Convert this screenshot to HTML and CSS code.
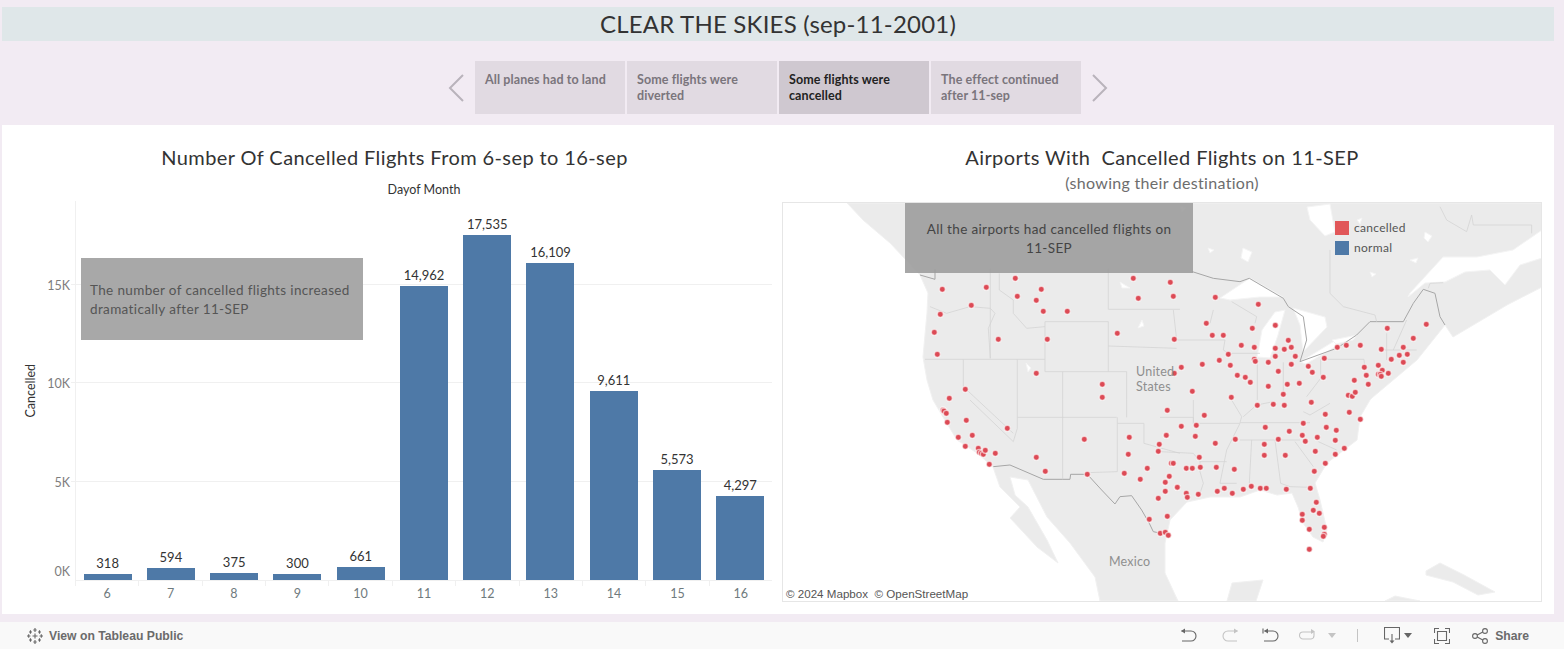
FILE: index.html
```html
<!DOCTYPE html>
<html lang="en">
<head>
<meta charset="utf-8">
<title>Clear the skies</title>
<link rel="stylesheet" href="styles.css">
</head>
<body>
<div class="dashboard">
  <header class="band"><h1>CLEAR THE SKIES (sep-11-2001)</h1></header>
  <nav class="story">
    <svg class="arrow" width="18" height="28" viewBox="0 0 18 28"><path d="M16 1 3 14l13 13"/></svg>
    <div class="tile">All planes had to land</div>
    <div class="tile">Some flights were diverted</div>
    <div class="tile active">Some flights were cancelled</div>
    <div class="tile">The effect continued after 11-sep</div>
    <svg class="arrow" width="18" height="28" viewBox="0 0 18 28"><path d="M2 1l13 13L2 27"/></svg>
  </nav>
  <main class="panel">
    <section class="left">
      <h2 class="chart-title">Number Of Cancelled Flights From 6-sep to 16-sep</h2>
      <div class="x-title">Dayof Month</div>
      <div class="chart">
        <div class="y-title"><span>Cancelled</span></div>
        <div class="y-axis">
          <span class="y-tick" style="bottom:2px">0K</span>
          <span class="y-tick" style="bottom:91px">5K</span>
          <span class="y-tick" style="bottom:190px">10K</span>
          <span class="y-tick" style="bottom:288px">15K</span>
        </div>
        <div class="plot-wrap">
          <div class="plot">
            <i class="grid" style="bottom:98px"></i>
            <i class="grid" style="bottom:197px"></i>
            <i class="grid" style="bottom:295px"></i>
            <div class="col"><span class="val">318</span><div class="bar" style="height:6px"></div></div>
            <div class="col"><span class="val">594</span><div class="bar" style="height:12px"></div></div>
            <div class="col"><span class="val">375</span><div class="bar" style="height:7px"></div></div>
            <div class="col"><span class="val">300</span><div class="bar" style="height:6px"></div></div>
            <div class="col"><span class="val">661</span><div class="bar" style="height:13px"></div></div>
            <div class="col"><span class="val">14,962</span><div class="bar" style="height:294px"></div></div>
            <div class="col"><span class="val">17,535</span><div class="bar" style="height:345px"></div></div>
            <div class="col"><span class="val">16,109</span><div class="bar" style="height:317px"></div></div>
            <div class="col"><span class="val">9,611</span><div class="bar" style="height:189px"></div></div>
            <div class="col"><span class="val">5,573</span><div class="bar" style="height:110px"></div></div>
            <div class="col"><span class="val">4,297</span><div class="bar" style="height:84px"></div></div>
          </div>
          <div class="x-axis">
            <span>6</span><span>7</span><span>8</span><span>9</span><span>10</span><span>11</span><span>12</span><span>13</span><span>14</span><span>15</span><span>16</span>
          </div>
        </div>
        <div class="note note-left">The number of cancelled flights increased dramatically after 11-SEP</div>
      </div>
    </section>
    <section class="right">
      <h2 class="chart-title">Airports With&nbsp; Cancelled Flights on 11-SEP</h2>
      <div class="subtitle">(showing their destination)</div>
      <div class="map">
        <svg class="map-svg" width="760" height="400" viewBox="782 202 760 400">
          <path class="land" d="M847 203H1542V287L1507 305 1453 337 1445 325 1417 360 1373 397 1370 400 1360 417 1357 440 1327 463 1315 483 1320 500 1327 530 1323 542 1313 537 1303 523 1298 507 1292 493 1277 495 1260 490 1240 497 1210 497 1187 502 1170 520 1165 543 1165 573 1178 601H1100L1095 577 1070 543 1047 517 1028 480 1010 477 1015 495 1028 507 1047 540 1058 563 1037 547 1010 518 1020 507 1000 487 993 467 977 453 957 440 943 417 933 400 927 380 923 357 927 313 928 293 920 275 890 243 863 220Z"/>
          <path class="land" d="M1426 571 1440 563 1464 575 1495 592 1478 595 1453 582 1426 575ZM1227 601 1232 583 1263 580 1256 601ZM1385 601 1395 596 1420 601Z"/>
          <g class="water">
            <path d="M1307 207 1330 204 1335 232 1325 236 1310 220Z"/>
            <path d="M1220 298 1250 278 1283 297 1260 297 1230 300Z"/>
            <path d="M1257 357 1262 330 1275 312 1285 310 1278 335 1270 358Z"/>
            <path d="M1293 308 1325 317 1327 327 1303 352 1300 325Z"/>
            <path d="M1300 362 1336 340 1340 344 1306 364Z"/>
            <path d="M1332 340 1357 335 1353 340 1336 344Z"/>
            <path d="M1542 230 1513 250 1477 257 1443 257 1410 293 1408 297 1425 283 1445 282 1465 272 1490 270 1505 285 1520 265 1542 258Z"/>
            <path d="M1243 248 1252 252 1248 262 1241 258ZM1208 248 1214 250 1210 253ZM1370 272 1376 274 1372 277ZM1425 232 1432 236 1428 242 1424 238ZM1410 260 1418 258 1416 263ZM1357 220 1362 218 1360 224ZM1026 363 1031 368 1028 372ZM1120 282 1130 288 1122 288ZM1142 320 1144 326 1138 328ZM1180 206 1186 208 1182 212Z"/>
          </g>
          <g class="border" transform="translate(1160 200) scale(.3333)">
            <path d="M97 215 160 235 240 245 268 235 370 295 385 320 430 350 440 420 420 485 530 445 590 405 630 365 730 365 760 310 790 268 825 280 840 350 855 375"/>
          </g>
          <g class="border" transform="translate(780 400) scale(.3333)">
            <path d="M640 200 690 195 790 238 870 238 872 223 922 223 965 270 1005 312 1020 290 1055 287 1085 330 1108 370 1120 395 1165 405"/>
          </g>
          <g class="border" transform="translate(780 200) scale(.3333)">
            <path d="M420 225 465 238 465 208"/>
          </g>
          <g class="state" transform="translate(780 200) scale(.3333)">
            <path d="M631 205V475M435 478H795M795 365H985V515M795 365V515H848M848 515H1040V600M985 328H1200M985 438 1190 445M550 478V560L700 700M712 478V600M848 515V600M985 205V328M658 220V270L700 300V340L740 385 795 380M631 325 570 320 500 340 450 320M631 325 645 340 625 385 631 475"/>
          </g>
          <g class="state" transform="translate(780 400) scale(.3333)">
            <path d="M570 0 700 125 712 85M712 0V85M712 52H1010M848 0V238M1040 0V52M1012 52V215L922 218M1012 70H1092V130L1200 160"/>
          </g>
          <g class="state" transform="translate(1160 400) scale(.3333)">
            <path d="M0 52H100V70H240L200 150 180 250H230M100 0V70M0 155 100 160 120 185H200M120 185V215L130 250 120 280M240 68H450M240 120H420M275 120 268 250M345 120 362 250 390 260 450 262M405 125 460 200M475 125 530 150M215 0 245 50 240 68M250 50 290 15 340 5M430 35 450 45 510 10"/>
          </g>
          <g class="state" transform="translate(1160 200) scale(.3333)">
            <path d="M50 420H195L190 450 205 460 215 460H300M215 305 290 350 285 370M292 490V600M370 487V580M495 478H612L615 510M482 478V535L440 590M680 400V480M740 360 700 450M675 450H770M40 330 50 420M160 330 150 370M510 150V280L550 320 645 345 650 365M840 20 860 60 920 95 935 45 940 75H1115V100M805 265 810 250 850 248"/>
          </g>
          <g class="dots" transform="translate(780 200) scale(.3333)">
            <circle cx="487" cy="268"/><circle cx="619" cy="262"/><circle cx="706" cy="235"/><circle cx="784" cy="268"/><circle cx="712" cy="289"/><circle cx="769" cy="301"/><circle cx="574" cy="316"/><circle cx="481" cy="343"/><circle cx="790" cy="334"/><circle cx="862" cy="334"/><circle cx="463" cy="397"/><circle cx="655" cy="418"/><circle cx="802" cy="418"/><circle cx="472" cy="463"/><circle cx="1060" cy="235"/><circle cx="1075" cy="295"/><circle cx="1012" cy="400"/><circle cx="769" cy="520"/><circle cx="967" cy="553"/><circle cx="967" cy="592"/><circle cx="556" cy="568"/><circle cx="508" cy="595"/><circle cx="1183" cy="418"/><circle cx="1183" cy="520"/>
          </g>
          <g class="dots" transform="translate(1160 200) scale(.3333)">
            <circle cx="31" cy="247"/><circle cx="40" cy="289"/><circle cx="166" cy="292"/><circle cx="295" cy="313"/><circle cx="139" cy="370"/><circle cx="346" cy="376"/><circle cx="277" cy="385"/><circle cx="157" cy="406"/><circle cx="190" cy="406"/><circle cx="385" cy="421"/><circle cx="244" cy="436"/><circle cx="283" cy="442"/><circle cx="346" cy="445"/><circle cx="373" cy="448"/><circle cx="394" cy="442"/><circle cx="205" cy="463"/><circle cx="346" cy="469"/><circle cx="406" cy="469"/><circle cx="178" cy="481"/><circle cx="283" cy="478"/><circle cx="286" cy="484"/><circle cx="325" cy="487"/><circle cx="394" cy="493"/><circle cx="127" cy="493"/><circle cx="211" cy="496"/><circle cx="64" cy="502"/><circle cx="232" cy="526"/><circle cx="256" cy="532"/><circle cx="271" cy="547"/><circle cx="355" cy="514"/><circle cx="445" cy="499"/><circle cx="457" cy="517"/><circle cx="493" cy="475"/><circle cx="490" cy="532"/><circle cx="532" cy="442"/><circle cx="559" cy="436"/><circle cx="601" cy="436"/><circle cx="664" cy="448"/><circle cx="682" cy="385"/><circle cx="799" cy="373"/><circle cx="760" cy="415"/><circle cx="730" cy="442"/><circle cx="742" cy="463"/><circle cx="718" cy="466"/><circle cx="730" cy="487"/><circle cx="694" cy="478"/><circle cx="655" cy="496"/><circle cx="613" cy="502"/><circle cx="619" cy="526"/><circle cx="685" cy="520"/><circle cx="655" cy="523"/><circle cx="667" cy="511"/><circle cx="661" cy="523"/><circle cx="664" cy="529"/><circle cx="583" cy="541"/><circle cx="625" cy="553"/><circle cx="418" cy="550"/><circle cx="382" cy="553"/><circle cx="325" cy="559"/><circle cx="97" cy="574"/><circle cx="214" cy="592"/><circle cx="370" cy="583"/><circle cx="565" cy="586"/><circle cx="577" cy="589"/><circle cx="586" cy="577"/>
          </g>
          <g class="dots" transform="translate(780 400) scale(.3333)">
            <circle cx="489" cy="30"/><circle cx="492" cy="33"/><circle cx="499" cy="40"/><circle cx="502" cy="67"/><circle cx="559" cy="61"/><circle cx="577" cy="106"/><circle cx="535" cy="112"/><circle cx="556" cy="139"/><circle cx="595" cy="145"/><circle cx="598" cy="157"/><circle cx="604" cy="160"/><circle cx="610" cy="163"/><circle cx="616" cy="151"/><circle cx="646" cy="160"/><circle cx="628" cy="193"/><circle cx="682" cy="85"/><circle cx="769" cy="172"/><circle cx="796" cy="214"/><circle cx="913" cy="118"/><circle cx="922" cy="223"/><circle cx="1162" cy="31"/><circle cx="1048" cy="112"/><circle cx="1045" cy="163"/><circle cx="1159" cy="106"/><circle cx="1138" cy="133"/><circle cx="1135" cy="154"/><circle cx="1102" cy="205"/><circle cx="1033" cy="220"/><circle cx="1081" cy="238"/><circle cx="1174" cy="190"/><circle cx="1180" cy="190"/><circle cx="1168" cy="229"/><circle cx="1156" cy="247"/><circle cx="1192" cy="262"/><circle cx="1156" cy="274"/><circle cx="1135" cy="295"/><circle cx="1162" cy="349"/><circle cx="1108" cy="358"/><circle cx="1141" cy="400"/><circle cx="1156" cy="397"/><circle cx="1165" cy="406"/>
          </g>
          <g class="dots" transform="translate(1160 400) scale(.3333)">
            <circle cx="133" cy="46"/><circle cx="64" cy="79"/><circle cx="109" cy="76"/><circle cx="19" cy="106"/><circle cx="106" cy="109"/><circle cx="166" cy="130"/><circle cx="226" cy="118"/><circle cx="118" cy="172"/><circle cx="79" cy="205"/><circle cx="97" cy="205"/><circle cx="121" cy="202"/><circle cx="169" cy="202"/><circle cx="223" cy="208"/><circle cx="52" cy="262"/><circle cx="79" cy="280"/><circle cx="82" cy="292"/><circle cx="115" cy="283"/><circle cx="172" cy="274"/><circle cx="193" cy="265"/><circle cx="217" cy="280"/><circle cx="250" cy="268"/><circle cx="274" cy="259"/><circle cx="301" cy="265"/><circle cx="319" cy="265"/><circle cx="379" cy="268"/><circle cx="451" cy="265"/><circle cx="463" cy="214"/><circle cx="496" cy="190"/><circle cx="526" cy="163"/><circle cx="553" cy="145"/><circle cx="466" cy="154"/><circle cx="526" cy="121"/><circle cx="472" cy="112"/><circle cx="436" cy="124"/><circle cx="427" cy="106"/><circle cx="529" cy="91"/><circle cx="499" cy="82"/><circle cx="388" cy="94"/><circle cx="430" cy="70"/><circle cx="316" cy="82"/><circle cx="355" cy="118"/><circle cx="313" cy="133"/><circle cx="313" cy="166"/><circle cx="376" cy="166"/><circle cx="292" cy="16"/><circle cx="340" cy="13"/><circle cx="373" cy="16"/><circle cx="454" cy="7"/><circle cx="496" cy="43"/><circle cx="568" cy="37"/><circle cx="601" cy="58"/><circle cx="469" cy="307"/><circle cx="460" cy="331"/><circle cx="478" cy="340"/><circle cx="427" cy="343"/><circle cx="427" cy="361"/><circle cx="448" cy="388"/><circle cx="493" cy="382"/><circle cx="493" cy="403"/><circle cx="490" cy="409"/><circle cx="448" cy="448"/>
          </g>
        </svg>
        <span class="place place-us">United<br>States</span>
        <span class="place place-mx">Mexico</span>
        <div class="note note-map">All the airports had cancelled flights on 11-SEP</div>
        <div class="legend">
          <div class="legend-row"><i class="swatch swatch-red"></i>cancelled</div>
          <div class="legend-row"><i class="swatch swatch-blue"></i>normal</div>
        </div>
        <div class="credit">© 2024 Mapbox&nbsp; © OpenStreetMap</div>
      </div>
    </section>
  </main>
</div>
<footer class="toolbar">
  <div class="view-link">
    <svg width="18" height="18" viewBox="0 0 18 18" class="logo"><path d="M9 1v4M7.300 3h3.400M9 13v4M7.300 15h3.400M1 9h3.400M2.700 7.300v3.400M13.600 9H17M15.300 7.300v3.400M9 6.500v5M6.500 9h5M4.500 3.300v3.400M3 5h3M13.500 3.300v3.400M12 5h3M4.500 11.300v3.400M3 13h3M13.500 11.300v3.400M12 13h3"/></svg>
    <span>View on Tableau Public</span>
  </div>
  <div class="tools">
    <svg class="tool" width="18" height="16" viewBox="0 0 18 16"><path d="M1.500 3H11a5 5 0 0 1 5 5v0a5 5 0 0 1-5 5H2"/><path class="fill" d="M1 3l4-2.500v5z"/></svg>
    <svg class="tool dim gap-a" width="18" height="16" viewBox="0 0 18 16"><path d="M16.500 3H7a5 5 0 0 0-5 5v0a5 5 0 0 0 5 5h9"/><path class="fill" d="M17 3l-4-2.500v5z"/></svg>
    <svg class="tool gap-a" width="18" height="16" viewBox="0 0 18 16"><path d="M1 .5v5M2.500 3H11a5 5 0 0 1 5 5v0a5 5 0 0 1-5 5H2"/><path class="fill" d="M2 3l4-2.500v5z"/></svg>
    <svg class="tool dim gap-b" width="18" height="16" viewBox="0 0 18 16"><path d="M15 4H5a3.500 3.500 0 0 0 0 7h8a3.500 3.500 0 0 0 3-3.500V4"/><path class="fill" d="M17 3.500l-4-2.500v5z"/></svg>
    <i class="caret dim-caret"></i>
    <i class="divider"></i>
    <svg class="tool" width="16" height="17" viewBox="0 0 16 17"><path d="M5 12H.5V.5h15V12H11M8 7v7"/><path class="fill" d="M5.500 13.500h5L8 16.500z"/></svg>
    <i class="caret"></i>
    <svg class="tool gap-c" width="16" height="16" viewBox="0 0 16 16"><path d="M.5 5V.5H5M11 .5h4.500V5M15.500 11v4.500H11M5 15.500H.5V11"/><path d="M3.500 3.500h9v9h-9z"/></svg>
    <svg class="tool gap-c" width="16" height="16" viewBox="0 0 16 16"><circle cx="3" cy="8" r="2.400"/><circle cx="13" cy="3" r="2.400"/><circle cx="13" cy="13" r="2.400"/><path d="M5.200 7 10.800 4M5.200 9l5.600 3"/></svg>
    <span class="share">Share</span>
  </div>
</footer>
</body>
</html>
```
FILE: styles.css
```css
* { box-sizing: border-box; }
html, body { margin: 0; padding: 0; background: #fff; }
body { width: 1564px; height: 672px; overflow: hidden; font-family: Lato, "Open Sans", sans-serif; color: #333; }

.dashboard { height: 622px; background: #f2ebf3; padding: 7px 10px 8px 2px; display: flex; flex-direction: column; }

.band { height: 34px; background: #dfe7e9; display: flex; align-items: center; justify-content: center; flex: none; padding-bottom: 2px; }
.band h1 { margin: 0; font-size: 24px; font-weight: 400; color: #333; letter-spacing: .2px; }

.story { height: 84px; flex: none; padding-top: 20px; padding-bottom: 11px; display: flex; justify-content: center; align-items: stretch; gap: 2px; }
.arrow { align-self: center; fill: none; stroke: #b9b3bb; stroke-width: 2; margin: 0 8px; flex: none; }
.tile { width: 150px; background: #e1dae2; padding: 11px 10px 0; font-size: 12.500px; font-weight: 700; line-height: 16px; color: #7a757c; letter-spacing: .1px; }
.tile.active { background: #cfc8d0; color: #222; }

.panel { flex: 1; background: #fff; display: flex; min-height: 0; }
.left { width: 780px; flex: none; display: flex; flex-direction: column; position: relative; }
.right { flex: none; width: 760px; display: flex; flex-direction: column; }

.chart-title { margin: 0; font-size: 20px; font-weight: 400; line-height: 24px; color: #333; text-align: center; letter-spacing: .4px; padding-top: 20px; }
.left .chart-title { height: 45px; padding-left: 5px; }
.right .chart-title { height: 45px; }
.subtitle { font-size: 16px; line-height: 18px; color: #6d6d6d; text-align: center; height: 32px; letter-spacing: .3px; padding-top: 4px; }
.x-title { font-size: 12.500px; line-height: 14px; text-align: center; color: #333; height: 16px; margin-top: 13px; padding-left: 64px; }

.chart { display: flex; flex: 1; position: relative; min-height: 0; margin-top: -5px; padding-top: 7px; }
.y-title { width: 40px; flex: none; height: 380px; display: flex; align-items: center; justify-content: center; padding-left: 16px; }
.y-title span { writing-mode: vertical-rl; transform: rotate(180deg); font-size: 12.500px; color: #333; }
.y-axis { width: 33px; height: 380px; flex: none; position: relative; }
.y-tick { position: absolute; right: 5px; font-size: 12.500px; line-height: 14px; color: #7d7d7d; }

.plot-wrap { width: 697px; flex: none; }
.plot { height: 380px; display: flex; align-items: flex-end; position: relative; border-left: 1px solid #f0f0f0; border-bottom: 1px solid #f0f0f0; }
.grid { position: absolute; left: -5px; right: 0; height: 1px; background: #f0f0f0; }
.col { flex: 1 1 0; display: flex; flex-direction: column; align-items: center; position: relative; }
.val { font-size: 13px; line-height: 15px; color: #333; margin-bottom: 3px; }
.bar { width: 48px; background: #4e79a7; }
.x-axis { display: flex; height: 22px; }
.x-axis span { flex: 1 1 0; text-align: center; font-size: 12.500px; line-height: 26px; color: #6f7a7d; border-left: 1px solid #f0f0f0; height: 5px; overflow: visible; }

.note { position: absolute; background: #a8a8a8; font-size: 13.500px; line-height: 19px; letter-spacing: .36px; color: #555; }
.note-left { left: 79px; top: 64px; width: 282px; height: 82px; padding: 23px 9px 0; }
.note-map { left: 122px; top: 0; width: 288px; height: 70px; padding: 17px 20px 0; text-align: center; background: rgba(155, 155, 155, .88); color: #444; }

.map { width: 760px; height: 400px; position: relative; border: 1px solid #e6e6e6; overflow: hidden; flex: none; }
.map-svg { display: block; position: absolute; left: -1px; top: -1px; }
.land { fill: #ebebeb; stroke: #f1f1f1; stroke-width: 1; }
.water path { fill: #fff; stroke: #f4f4f4; }
.border path { fill: none; stroke: #a6a6a6; stroke-width: 3; }
.state path { fill: none; stroke: #d4d4d4; stroke-width: 2.400; }
.dots circle { r: 9px; fill: #dc4a55; stroke: rgba(255, 255, 255, .6); stroke-width: 4; }

.place { position: absolute; font-size: 12.500px; line-height: 15px; color: #8f8f8f; letter-spacing: .2px; }
.place-us { left: 353px; top: 161px; }
.place-mx { left: 326px; top: 351px; }

.legend { position: absolute; left: 552px; top: 18px; display: flex; flex-direction: column; gap: 6px; }
.legend-row { display: flex; align-items: center; gap: 5px; font-size: 12px; line-height: 14px; color: #555; letter-spacing: .3px; }
.swatch { width: 14px; height: 14px; display: block; }
.swatch-red { background: #e15759; }
.swatch-blue { background: #4e79a7; }

.credit { position: absolute; left: 1px; bottom: 0; padding: 1px 2px; background: rgba(255, 255, 255, .7); font-family: "Liberation Sans", Arial, sans-serif; font-size: 11.600px; line-height: 13px; color: #555; }

.toolbar { height: 27px; background: #f9f9f9; display: flex; align-items: center; justify-content: space-between; padding: 0 35px 0 26px; }
.view-link { display: flex; align-items: center; gap: 5px; font-family: "Liberation Sans", Arial, sans-serif; font-size: 12.200px; font-weight: 700; color: #6b6b6b; }
.logo { fill: none; stroke: #666; stroke-width: 1.100; }
.tools { display: flex; align-items: center; }
.tool { fill: none; stroke: #666; stroke-width: 1.100; flex: none; }
.tool .fill { fill: #666; stroke: none; }
.tool.dim { stroke: #c4c4c4; }
.tool.dim .fill { fill: #c4c4c4; }
.gap-a { margin-left: 23px; }
.gap-b { margin-left: 18px; }
.gap-c { margin-left: 22px; }
.caret { width: 0; height: 0; border-left: 4px solid transparent; border-right: 4px solid transparent; border-top: 5px solid #666; margin-left: 4px; }
.dim-caret { border-top-color: #c4c4c4; margin-left: 12px; }
.divider { width: 1px; height: 13px; background: #c4c4c4; margin: 0 26px 0 21px; }
.share { font-family: "Liberation Sans", Arial, sans-serif; font-size: 12.200px; font-weight: 700; color: #6b6b6b; margin-left: 7px; }
```
